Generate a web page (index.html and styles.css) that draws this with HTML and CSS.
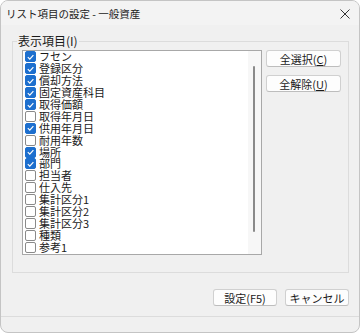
FILE: index.html
```html
<!DOCTYPE html>
<html lang="ja">
<head>
  <meta charset="UTF-8" />
  <title>リスト項目の設定 - 一般資産</title>
  <link rel="stylesheet" href="styles.css">
</head>
<body>
  <div class="window">
    <div class="titlebar">
      <span class="title">リスト項目の設定 - 一般資産</span>
      <svg class="close" width="10" height="10" viewBox="0 0 10 10">
        <path d="M0.5 0.5 L9.5 9.5 M9.5 0.5 L0.5 9.5" stroke="#333" stroke-width="1" fill="none"/>
      </svg>
    </div>

    <fieldset class="group">
      <legend>表示項目(I)</legend>
      <div class="group-body">
        <div class="listbox">
          <ul class="items" id="items"></ul>
          <div class="scrollbar"><div class="thumb"></div></div>
        </div>
        <div class="side-buttons">
          <button class="btn">全選択(<u>C</u>)</button>
          <button class="btn">全解除(<u>U</u>)</button>
        </div>
      </div>
    </fieldset>

    <div class="footer-buttons">
      <button class="btn wide">設定(F5)</button>
      <button class="btn wide">キャンセル</button>
    </div>
    <div class="statusbar"></div>
  </div>

  <script>
    const items = [
      ["フセン", true], ["登録区分", true], ["償却方法", true], ["固定資産科目", true],
      ["取得価額", true], ["取得年月日", false], ["供用年月日", true], ["耐用年数", false],
      ["場所", true], ["部門", true], ["担当者", false], ["仕入先", false],
      ["集計区分1", false], ["集計区分2", false], ["集計区分3", false], ["種類", false],
      ["参考1", false]
    ];
    const list = document.getElementById("items");
    for (const [label, checked] of items) {
      const li = document.createElement("li");
      li.className = "item";
      li.innerHTML =
        '<span class="check' + (checked ? ' on' : '') + '">' +
        (checked ? '<svg width="10" height="10" viewBox="0 0 10 10"><path d="M2 5.2 L4.2 7.3 L8.2 2.8" stroke="#fff" stroke-width="1.3" fill="none"/></svg>' : '') +
        '</span><span class="label">' + label + '</span>';
      list.appendChild(li);
    }
  </script>
</body>
</html>
```

FILE: styles.css
```css
html, body {
  margin: 0;
  padding: 0;
  background: #ffffff;
}

body {
  font-family: "Noto Sans CJK JP", "Noto Sans", sans-serif;
  color: #1a1a1a;
}

.window {
  width: 360px;
  height: 333px;
  box-sizing: border-box;
  background: #f0f0f0;
  border: 1px solid #c4c4c4;
  border-radius: 8px;
  overflow: hidden;
}

.titlebar {
  height: 24px;
  display: flex;
  align-items: center;
  justify-content: space-between;
  padding: 0 9px 0 5px;
  background: #f3f3f3;
  font-size: 10.5px;
  color: #222;
}

.close {
  margin-top: 1px;
}

.group {
  margin: 9px 10px 0 11px;
  padding: 0 0 15px 9px;
  height: 239px;
  box-sizing: border-box;
  border: 1px solid #dcdcdc;
  border-radius: 0;
}

.group legend {
  padding: 0 1px;
  margin-left: -5px;
  font-size: 12px;
  line-height: 14px;
  color: #1a1a1a;
}

.group-body {
  display: flex;
  align-items: flex-start;
  gap: 4px;
  padding-top: 2px;
}

.listbox {
  width: 240px;
  height: 205px;
  box-sizing: border-box;
  border: 1px solid #a8a8a8;
  background: #ffffff;
  display: flex;
}

.items {
  list-style: none;
  margin: 0;
  padding: 0 0 0 2px;
  flex: 1;
}

.item {
  height: 11.9px;
  display: flex;
  align-items: center;
  gap: 3px;
  font-size: 11px;
  line-height: 11px;
  white-space: nowrap;
}

.check {
  width: 11px;
  height: 11px;
  box-sizing: border-box;
  border: 1px solid #8a8a8a;
  border-radius: 2px;
  background: #fff;
  display: flex;
  align-items: center;
  justify-content: center;
  flex: none;
}

.check.on {
  background: #1d6fce;
  border-color: #1d6fce;
}

.label {
  color: #1a1a1a;
}

.scrollbar {
  width: 13px;
  background: #f7f7f7;
  position: relative;
}

.thumb {
  position: absolute;
  left: 5px;
  top: 15px;
  width: 2px;
  height: 166px;
  background: #8a8a8a;
  border-radius: 1px;
}

.side-buttons {
  display: flex;
  flex-direction: column;
  gap: 8px;
}

.btn {
  width: 75px;
  height: 17px;
  padding: 0;
  box-sizing: border-box;
  border: 1px solid #d0d0d0;
  border-bottom-color: #bdbdbd;
  border-radius: 3px;
  background: #fdfdfd;
  font-family: "Noto Sans CJK JP", "Noto Sans", sans-serif;
  font-size: 11px;
  line-height: 14px;
  color: #1a1a1a;
}

.btn u {
  text-underline-offset: 1px;
}

.footer-buttons {
  display: flex;
  justify-content: flex-end;
  gap: 8px;
  margin: 16px 10px 0 0;
}

.btn.wide {
  width: 64px;
}

.statusbar {
  margin-top: 10px;
  border-top: 1px solid #dcdcdc;
  height: 18px;
}
```
